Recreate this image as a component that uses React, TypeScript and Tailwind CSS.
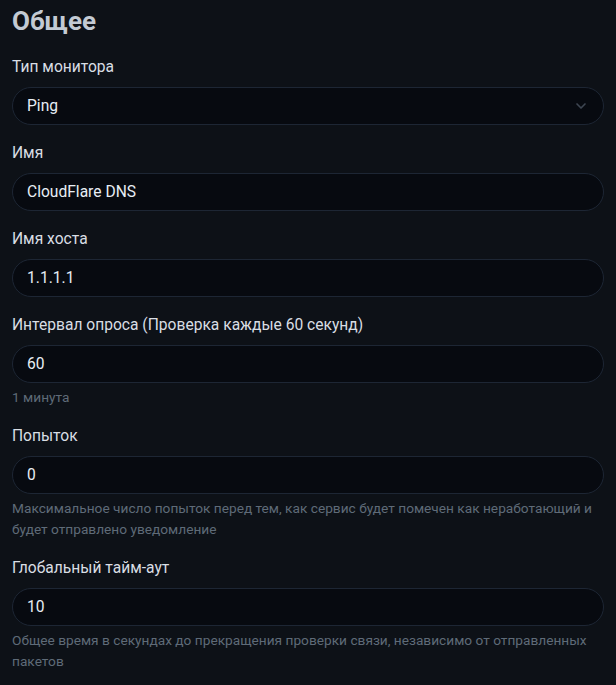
import { ChevronDown } from "lucide-react";

type Field = {
  label: string;
  value: string;
  select?: boolean;
  help?: string;
};

const fields: Field[] = [
  { label: "Тип монитора", value: "Ping", select: true },
  { label: "Имя", value: "CloudFlare DNS" },
  { label: "Имя хоста", value: "1.1.1.1" },
  { label: "Интервал опроса (Проверка каждые 60 секунд)", value: "60", help: "1 минута" },
  {
    label: "Попыток",
    value: "0",
    help: "Максимальное число попыток перед тем, как сервис будет помечен как неработающий и будет отправлено уведомление",
  },
  {
    label: "Глобальный тайм-аут",
    value: "10",
    help: "Общее время в секундах до прекращения проверки связи, независимо от отправленных пакетов",
  },
];

const FormField = ({ field }: { field: Field }) => (
  <div className="mb-4">
    <label className="block mb-2 text-[15.6px] leading-6 text-[#d9dee4]">{field.label}</label>
    <div className="relative flex items-center h-[38px] rounded-full border border-[#1d2634] bg-[#070a10] px-[14px]">
      <span className="text-[15.6px] leading-6 text-[#e8eef5]">{field.value}</span>
      {field.select && (
        <ChevronDown size={16} strokeWidth={2.5} className="absolute right-[14px] text-[#3e4652]" />
      )}
    </div>
    {field.help && (
      <p className="mt-1 text-[13.7px] leading-[21px] text-[#5f6b78]">{field.help}</p>
    )}
  </div>
);

export default function App() {
  return (
    <div
      className="min-h-[685px] bg-[#0d1117] px-3 pt-[6px]"
      style={{ fontFamily: "Roboto, 'Noto Sans', sans-serif" }}
    >
      <h4 className="mb-[19px] pt-[1px] text-[26px] leading-[29px] font-bold text-[#c3cad3]">Общее</h4>
      {fields.map((f) => (
        <FormField key={f.label} field={f} />
      ))}
    </div>
  );
}
